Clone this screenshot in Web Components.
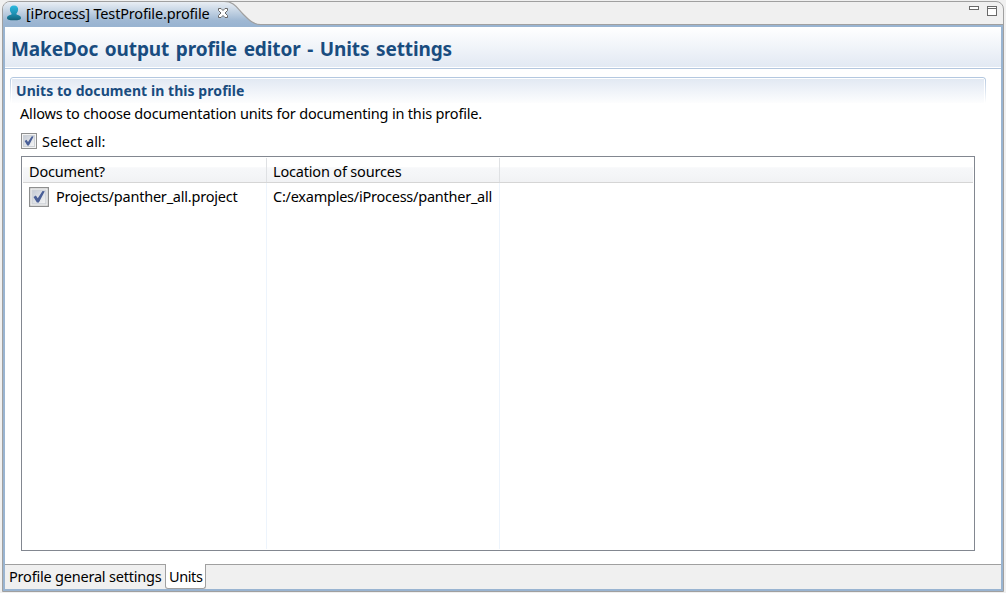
<!DOCTYPE html>
<html lang="en">
<head>
<meta charset="utf-8">
<title>MakeDoc profile editor</title>
<style>
html,body{margin:0;height:100%;overflow:hidden;background:#f0f0f0}
body{font:14.5px/20px "Noto Sans","Open Sans",sans-serif;color:#000}
</style>
</head>
<body>
<editor-window>
  <editor-tab slot="tab"><fit-text span="183.500">[iProcess] TestProfile.profile</fit-text></editor-tab>
  <form-heading><fit-text span="441">MakeDoc output profile editor - Units settings</fit-text></form-heading>
  <form-section>
    <fit-text slot="title" span="228.500">Units to document in this profile</fit-text>
    <fit-text slot="description" span="462">Allows to choose documentation units for documenting in this profile.</fit-text>
    <check-box size="16"><fit-text span="63.500">Select all:</fit-text></check-box>
    <unit-table>
      <fit-text slot="h1" span="76">Document?</fit-text>
      <fit-text slot="h2" span="128.500">Location of sources</fit-text>
      <check-box slot="c1" size="20"><fit-text span="181.500">Projects/panther_all.project</fit-text></check-box>
      <fit-text slot="c2" span="219">C:/examples/iProcess/panther_all</fit-text>
    </unit-table>
  </form-section>
  <page-tab slot="pages" style="width:160px"><fit-text span="152.500">Profile general settings</fit-text></page-tab>
  <page-tab slot="pages" active><fit-text span="33.500">Units</fit-text></page-tab>
</editor-window>
<script>
const element = (name, html, connected) => customElements.define(name, class extends HTMLElement {
  constructor() {
    super();
    this.attachShadow({mode: 'open'}).innerHTML = html;
  }
  connectedCallback() { if (connected) connected(this); }
});

element('editor-window', `
<style>
:host{display:flex;flex-direction:column;box-sizing:border-box;height:593px;padding:1px 2px 1px 2px;background:#f0f0f0}
.frame{display:flex;flex-direction:column;flex:1;box-sizing:border-box;width:1002px;border:1px solid #a0a0a0;border-radius:8px 8px 0 0;background:#f0f0f0;overflow:hidden}
.bar{display:flex;height:22px;flex:none;background:linear-gradient(#a0a0a0,#a0a0a0) 0 100%/100% 1px no-repeat;padding-bottom:1px}
.controls{margin-left:auto;width:36px;height:22px}
.body{display:flex;flex-direction:column;flex:1;border:2px solid #99b4d1;background:#fff;min-height:0}
.main{flex:1;display:flex;flex-direction:column;min-height:0}
.pages{display:flex;height:24px;flex:none;border-top:1px solid #a0a0a0;background:#f0f0f0}
</style>
<div class="frame">
  <div class="bar"><slot name="tab"></slot>
    <svg class="controls" viewBox="0 0 36 22" shape-rendering="crispEdges"><g fill="#fff" stroke="#696969"><rect x="2.500" y="4.500" width="9" height="3"/><path d="M20.500 4.500h9v9h-9zM20 6.500h10"/></g></svg>
  </div>
  <div class="body"><div class="main"><slot></slot></div><div class="pages"><slot name="pages"></slot></div></div>
</div>`);

element('editor-tab', `
<style>
:host{display:grid;width:262px;height:23px;flex:none}
svg,.row{grid-area:1/1}
.row{display:flex;align-items:center;height:22px;padding-left:3px}
.icon{width:16px;height:16px;margin-right:4px}
.close{width:12px;height:12px;margin-left:7px;margin-top:-1px}
</style>
<svg width="262" height="23" viewBox="0 0 262 23">
  <defs><linearGradient id="g" x2="0" y2="1"><stop stop-color="#e9eef4"/><stop offset=".35" stop-color="#c9d7e6"/><stop offset=".8" stop-color="#9fb8d3"/><stop offset="1" stop-color="#99b4d1"/></linearGradient></defs>
  <path d="M0 0H223C231 0 234 6 240 12C246 18 250 22.500 258 22.500V23H0Z" fill="url(#g)"/>
  <path d="M221 -.5C231 -.5 234 6 240 12C246 18 250 22.500 258 22.500H262" fill="none" stroke="#a0a0a0" stroke-width="1.200"/>
</svg>
<div class="row">
  <svg class="icon" viewBox="0 0 16 16">
    <defs><linearGradient id="p" x2="0" y2="1"><stop stop-color="#2cb9df"/><stop offset=".55" stop-color="#1d91b3"/><stop offset="1" stop-color="#126078"/></linearGradient></defs>
    <path d="M8 .6C5 .6 3.600 2.600 3.900 5C4.100 6.900 5.200 8 5.800 8.900C5.500 10 1 9.900 1 13C1 14.700 3 15.300 8 15.300S15 14.700 15 13C15 9.900 10.500 10 10.200 8.900C10.800 8 11.900 6.900 12.100 5C12.400 2.600 11 .6 8 .6Z" fill="url(#p)"/>
  </svg>
  <slot></slot>
  <svg class="close" viewBox="0 0 12 12"><path d="M1.500 1.500H4L6 3.500L8 1.500H10.500V3.500L8 6L10.500 8.500V10.500H8L6 8.500L4 10.500H1.500V8.500L4 6L1.500 3.500Z" fill="#fff" stroke="#696969"/></svg>
</div>`);

element('form-heading', `
<style>
:host{display:flex;align-items:center;box-sizing:border-box;height:42px;flex:none;padding:2px 0 0 6px;border-bottom:1px solid #b3c7df;background:linear-gradient(#fff,#e2e9f3) 0 0/100% 40px no-repeat;color:#194c7f;font-weight:bold;font-size:19px;line-height:26px;word-spacing:1.800px}
</style><slot></slot>`);

element('form-section', `
<style>
:host{display:flex;flex-direction:column;box-sizing:border-box;flex:1;padding:8px 15px 13px 5px}
.title{box-sizing:border-box;height:26px;padding:5px 0 0 6px;position:relative;background:linear-gradient(#e2e9f3,#fff) 2px 2px/calc(100% - 4px) 100% no-repeat;color:#194c7f;font-weight:bold;font-size:14px;line-height:18px}
.title::before{content:"";position:absolute;inset:0;border:1px solid #b3c7df;border-bottom:0;border-radius:3px 3px 0 0;-webkit-mask:linear-gradient(#000,transparent);mask:linear-gradient(#000,transparent)}
.description{height:20px;padding-left:10px}
.content{display:flex;flex-direction:column;flex:1;padding:8px 0 0 11px;margin-right:11px}
</style>
<div class="title"><slot name="title"></slot></div>
<div class="description"><slot name="description"></slot></div>
<div class="content"><slot></slot></div>`);

element('check-box', `
<style>
:host{display:flex;align-items:center;height:20px;flex:none}
svg{flex:none;margin-right:5px}
:host([size="20"]) svg{margin-right:7px}
:host([size="20"]) slot{display:block;margin-top:-2px}
</style>
<svg viewBox="0 0 16 16"><defs><linearGradient id="b" x2="1" y2="1"><stop stop-color="#c4cad4"/><stop offset="1" stop-color="#f6f6f6"/></linearGradient></defs>
<rect x=".5" y=".5" width="15" height="15" fill="#f4f4f4" stroke="#8e8f8f"/><rect x="2.500" y="2.500" width="11" height="11" fill="url(#b)" stroke="#cdd1d6"/>
<path d="M3.600 7.900L5.500 6.700L7 9L10.800 3.200L12.600 3.400L7.900 12.400H6.300Z" fill="#4a5f97"/></svg><slot></slot>`,
host => {
  const svg = host.shadowRoot.querySelector('svg');
  svg.setAttribute('width', host.getAttribute('size'));
  svg.setAttribute('height', host.getAttribute('size'));
});

element('unit-table', `
<style>
:host{display:flex;flex-direction:column;flex:1;box-sizing:border-box;border:1px solid #828790;margin-top:5px;padding:1px;background:#fff}
.head,.rows{display:grid;grid-template-columns:244px 233px 1fr}
.head{height:24px;border-bottom:1px solid #d5d5d5;background:linear-gradient(#fff 0 38%,#f7f8fa 40%,#f1f2f4)}
.rows{flex:1}
.head>div,.rows>div{box-sizing:border-box;border-right:1px solid #dfe1e4;padding:3px 0 0 6px}
.rows>div{border-color:#edf4fc}
.head>div:last-child,.rows>div:last-child{border:0}
</style>
<div class="head"><div><slot name="h1"></slot></div><div><slot name="h2"></slot></div><div></div></div>
<div class="rows"><div style="padding-top:4px"><slot name="c1"></slot></div><div><slot name="c2"></slot></div><div></div></div>`);

element('page-tab', `
<style>
:host{display:block;box-sizing:border-box;height:24px;padding:1px 0 0 4px}
:host([active]){height:25px;margin-top:-1px;padding:2px 0 0 3px;width:41px;background:#fff;border:1px solid #a0a0a0;border-top:0;border-radius:0 0 3px 3px}
</style><slot></slot>`);

/* A single line of text whose tracking is adjusted so that it spans a given width. */
element('fit-text', `
<style>:host{display:block;white-space:nowrap}span{display:inline-block}</style><span><slot></slot></span>`,
host => {
  const span = host.shadowRoot.querySelector('span');
  const fit = () => {
    span.style.letterSpacing = '0';
    const natural = span.getBoundingClientRect().width;
    if (natural) span.style.letterSpacing = (Number(host.getAttribute('span')) - natural) / host.textContent.length + 'px';
  };
  requestAnimationFrame(fit);
  fit();
});
</script>
</body>
</html>
